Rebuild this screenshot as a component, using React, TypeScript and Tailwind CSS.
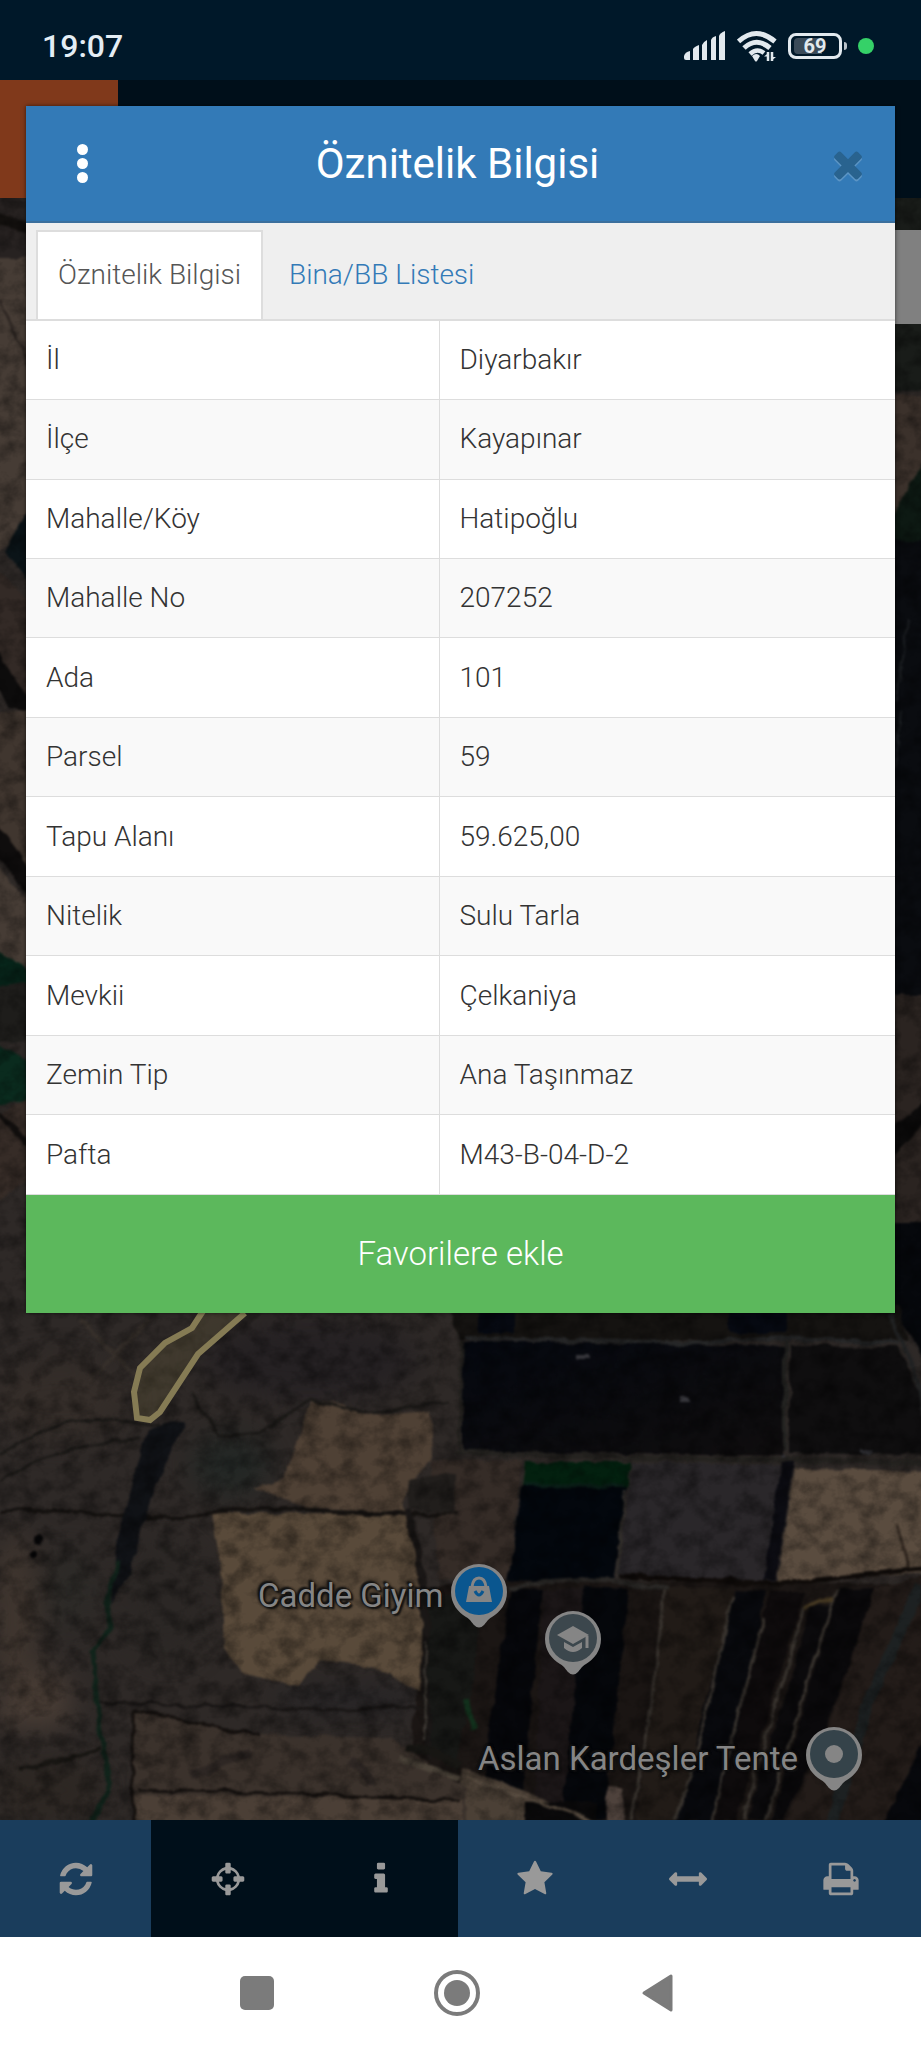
import React from "react";

const FONT = "font-['Roboto','Noto_Sans',sans-serif]";

const ICONS = {
  refresh:
    "M1639 1056q0 5-1 7-64 268-268 434.5t-478 166.5q-146 0-282.5-55t-243.5-157l-129 129q-19 19-45 19t-45-19-19-45v-448q0-26 19-45t45-19h448q26 0 45 19t19 45-19 45l-137 137q71 66 161 102t187 36q134 0 250-65t186-179q11-17 53-117 8-23 30-23h192q13 0 22.5 9.5t9.5 22.5zm25-800v448q0 26-19 45t-45 19h-448q-26 0-45-19t-19-45 19-45l138-138q-148-137-349-137-134 0-250 65t-186 179q-11 17-53 117-8 23-30 23h-199q-13 0-22.5-9.5t-9.5-22.5v-7q65-268 270-434.5t480-166.5q146 0 284 55.5t245 156.5l130-129q19-19 45-19t45 19 19 45z",
  crosshairs:
    "M1325 1024h-109q-26 0-45-19t-19-45v-128q0-26 19-45t45-19h109q-32-108-112.5-188.5t-188.5-112.5v109q0 26-19 45t-45 19h-128q-26 0-45-19t-19-45v-109q-108 32-188.5 112.5t-112.5 188.5h109q26 0 45 19t19 45v128q0 26-19 45t-45 19h-109q32 108 112.5 188.5t188.5 112.5v-109q0-26 19-45t45-19h128q26 0 45 19t19 45v109q108-32 188.5-112.5t112.5-188.5zm339-192v128q0 26-19 45t-45 19h-143q-37 161-154.5 278.5t-278.5 154.5v143q0 26-19 45t-45 19h-128q-26 0-45-19t-19-45v-143q-161-37-278.5-154.5t-154.5-278.5h-143q-26 0-45-19t-19-45v-128q0-26 19-45t45-19h143q37-161 154.5-278.5t278.5-154.5v-143q0-26 19-45t45-19h128q26 0 45 19t19 45v143q161 37 278.5 154.5t154.5 278.5h143q26 0 45 19t19 45z",
  info: "M1216 1344v128q0 26-19 45t-45 19h-512q-26 0-45-19t-19-45v-128q0-26 19-45t45-19h64v-384h-64q-26 0-45-19t-19-45v-128q0-26 19-45t45-19h384q26 0 45 19t19 45v576h64q26 0 45 19t19 45zm-128-1152v192q0 26-19 45t-45 19h-256q-26 0-45-19t-19-45v-192q0-26 19-45t45-19h256q26 0 45 19t19 45z",
  star: "M1728 647q0 22-26 48l-363 354 86 500q1 7 1 20 0 21-10.5 35.5t-30.5 14.5q-19 0-40-12l-449-236-449 236q-22 12-40 12-21 0-31.5-14.5t-10.5-35.5q0-6 2-20l86-500-364-354q-25-27-25-48 0-37 56-46l502-73 225-455q19-41 49-41t49 41l225 455 502 73q56 9 56 46z",
  arrows:
    "M1792 896q0 26-19 45l-256 256q-19 19-45 19t-45-19-19-45v-128h-1024v128q0 26-19 45t-45 19-45-19l-256-256q-19-19-19-45t19-45l256-256q19-19 45-19t45 19 19 45v128h1024v-128q0-26 19-45t45-19 45 19l256 256q19 19 19 45z",
  print:
    "M448 1536h896v-256h-896v256zm0-640h896v-384h-160q-40 0-68-28t-28-68v-160h-640v640zm1152 64q0-26-19-45t-45-19-45 19-19 45 19 45 45 19 45-19 19-45zm128 0v416q0 13-9.5 22.5t-22.5 9.5h-224v160q0 40-28 68t-68 28h-960q-40 0-68-28t-28-68v-160h-224q-13 0-22.5-9.5t-9.5-22.5v-416q0-79 56.5-135.5t135.5-56.5h64v-544q0-40 28-68t68-28h672q40 0 88 20t76 48l152 152q28 28 48 76t20 88v256h64q79 0 135.5 56.5t56.5 135.5z",
  times:
    "M1490 1322q0 40-28 68l-136 136q-28 28-68 28t-68-28l-294-294-294 294q-28 28-68 28t-68-28l-136-136q-28-28-28-68t28-68l294-294-294-294q-28-28-28-68t28-68l136-136q28-28 68-28t68 28l294 294 294-294q28-28 68-28t68 28l136 136q28 28 28 68t-28 68l-294 294 294 294q28 28 28 68z",
};

function Icon({ name, className }: { name: keyof typeof ICONS; className: string }) {
  return (
    <svg viewBox="0 0 1792 1792" className={className} fill="currentColor" aria-hidden="true">
      <path d={ICONS[name]} />
    </svg>
  );
}

function StatusBar() {
  return (
    <header className="flex h-20 items-center justify-between bg-[#001829] pt-3 pr-[47px] pl-[42px]">
      <time className="text-[32px] leading-9 font-medium text-[#e4edf4]">19:07</time>
      <div className="flex items-center gap-[11px] text-[#e2e9ee]">
        <svg className="h-8 w-[42px]" viewBox="0 0 42 32" fill="currentColor" aria-hidden="true">
          <path d="M0 26q1-4 6-5v9H2q-2 0-2-2z" />
          <path d="M9 19q1-2 6-4v15H9z" />
          <path d="M18 15q1-3 5-5v20h-5z" />
          <path d="M27 10q1-3 5-4v24h-5z" />
          <path d="M35 6q1-3 6-5v29h-6z" />
        </svg>
        <svg className="h-8 w-10" viewBox="0 0 40 32" fill="none" stroke="currentColor" strokeWidth="5" aria-hidden="true">
          <path d="M1.500 11.500Q19 -4.500 38 11.500" />
          <path d="M7 18Q19.500 6.500 33 18" />
          <path d="M13 24Q20 17.500 27 23" strokeWidth="4.500" />
          <path d="M15 26q4.500-4 8 0l-3 5q-1 1-2 0z" fill="currentColor" stroke="none" />
          <path d="M31 22v9M35 31v-9" strokeWidth="2.500" />
          <path d="M27 26.500l5-4v4zM39 27l-5 4v-4z" fill="currentColor" stroke="none" />
        </svg>
        <div className="flex items-center gap-0.5">
          <span className="relative flex h-[26px] w-[54px] items-center justify-center rounded-[8px] border-[3px] border-[#e2e9ee]">
            <span className="absolute top-0.5 bottom-0.5 left-[3px] w-7 rounded-l-[4px] bg-[#3a4a58]" />
            <span className="relative text-[20px] leading-5 font-bold">69</span>
          </span>
          <span className="h-2 w-[3px] rounded-r bg-[#b9c2c9]" />
        </div>
        <span className="h-4 w-4 rounded-full bg-[#35d168]" />
      </div>
    </header>
  );
}

function SatelliteMap() {
  return (
    <svg
      className="absolute inset-0 h-full w-full"
      viewBox="0 198 921 1622"
      preserveAspectRatio="xMidYMin slice"
      aria-hidden="true"
    >
      <defs>
        <filter id="edges" x="-5%" y="-5%" width="110%" height="110%" colorInterpolationFilters="sRGB">
          <feTurbulence type="fractalNoise" baseFrequency="0.05" numOctaves="3" seed="4" />
          <feDisplacementMap in="SourceGraphic" scale="8" xChannelSelector="R" yChannelSelector="G" />
          <feGaussianBlur stdDeviation="1" />
        </filter>
        <filter id="soft" x="-40%" y="-40%" width="180%" height="180%" colorInterpolationFilters="sRGB">
          <feGaussianBlur stdDeviation="14" />
        </filter>
        <filter id="grain" x="0" y="0" width="100%" height="100%" colorInterpolationFilters="sRGB">
          <feTurbulence type="fractalNoise" baseFrequency="0.05 0.06" numOctaves="4" seed="9" />
          <feColorMatrix values="0 0 0 0 0  0 0 0 0 0  0 0 0 0 0  1.4 0 0 0 -0.55" />
        </filter>
        <linearGradient id="field" x1="0" y1="0" x2="1" y2="1">
          <stop offset="0" stopColor="#05080f" />
          <stop offset="1" stopColor="#0f0d0e" />
        </linearGradient>
      </defs>
      <rect y="198" width="921" height="1622" fill="#2e2927" />

      <g filter="url(#soft)">
        <ellipse cx="60" cy="1400" rx="70" ry="40" fill="#342d29" />
        <ellipse cx="310" cy="1360" rx="110" ry="40" fill="#252123" />
        <ellipse cx="230" cy="1465" rx="40" ry="30" fill="#232725" />
        <ellipse cx="165" cy="1600" rx="45" ry="60" fill="#2b2725" />
        <ellipse cx="15" cy="1620" rx="22" ry="90" fill="#40362f" />
        <ellipse cx="45" cy="1700" rx="26" ry="30" fill="#4a3e36" />
        <ellipse cx="10" cy="1715" rx="18" ry="14" fill="#4a3e36" />
        <ellipse cx="70" cy="1590" rx="25" ry="40" fill="#2c2a27" />
        <ellipse cx="45" cy="1790" rx="60" ry="30" fill="#2d2723" />
        <ellipse cx="350" cy="1700" rx="80" ry="14" fill="#262426" />
      </g>

      <g filter="url(#edges)">
        <path d="M-10 190h50v70H-10z" fill="#272221" />
        <path d="M-10 222l50 12v-8l-50-14z" fill="#14110f" />
        <path d="M-10 258h50v267l-50 30z" fill="#463c35" />
        <path d="M0 300l30 70" stroke="#2a2320" strokeWidth="2" />
        <path d="M4 552l24-42v70z" fill="#0b1418" />
        <path d="M-10 560l40 40v110l-40-60z" fill="#332a26" />
        <path d="M-10 640l40 62v10l-20-4-20-40z" fill="#0d0c0c" />
        <path d="M-10 715l40-5v165l-40-50z" fill="#40362f" />
        <path d="M-10 815l40 52v30l-40-48z" fill="#0f0d0d" />
        <path d="M-10 860l40 42v66l-40-14z" fill="#463c35" />
        <path d="M-10 945l40 25v14l-40 4z" fill="#07251a" />
        <path d="M-10 988l40-6v60h-40z" fill="#1e1d1b" />
        <path d="M-10 1038l40 24v38l-40 6z" fill="#0a2b1e" />
        <path d="M-10 1118l40-20v80l-40 30z" fill="#362c27" />
        <path d="M-10 1100l40 42v8l-40-42z" fill="#141110" />

        <path d="M880 190h60v200h-60z" fill="#191c19" />
        <path d="M880 390l60 10v130h-60z" fill="#3b312b" />
        <path d="M890 520l50-90v120h-50z" fill="#0d1913" />
        <path d="M880 540h60v455h-60z" fill="#0a0c10" />
        <path d="M895 770l6-60M897 700l10-80" stroke="#1d2023" strokeWidth="2" />
        <path d="M880 995h60v230h-60z" fill="#2b2421" />
        <path d="M890 1130l50-45v24l-50 50z" fill="#0c0b0b" />
        <path d="M880 1223h60v160l-44-70h-16z" fill="#06080c" />

        <path d="M448 1305h450l10 35H460z" fill="#151311" />
        <path d="M478 1305h36v28h-36zM730 1305h55v28h-55z" fill="#060911" />
        <path d="M463 1345q4-4 12-4l308 5v110l-320-4z" fill="url(#field)" />
        <path d="M466 1338l160 3 60 2 100-5 112 5" stroke="#262728" strokeWidth="4" fill="none" />
        <path d="M790 1346l108 1 40 85v24l-148-2z" fill="#0f0e0f" />
        <path d="M785 1340v112" stroke="#242422" strokeWidth="4" />
        <path d="M463 1340l-4 112" stroke="#24221f" strokeWidth="4" />
        <path d="M890 1313l30 75 8 48" stroke="#212223" strokeWidth="4" fill="none" />
        <path d="M577 1357h12M680 1399h10M781 1457l5 2M860 1450l10 4" stroke="#35353a" strokeWidth="4" />
        <path d="M455 1453l180 5 150 2 150 3" stroke="#252320" strokeWidth="5" fill="none" />

        <path d="M430 1460h92l-13 120h-70z" fill="#352c27" />
        <path d="M525 1462h106l-4 27H522z" fill="#03200f" />
        <path d="M522 1487h105l-14 94H508z" fill="#03070d" />
        <path d="M524 1485l100 1" stroke="#0b2019" strokeWidth="4" />
        <path d="M632 1462l158 3-14 118-158-6z" fill="#2a272a" />
        <path d="M625 1490l-8 86" stroke="#35322e" strokeWidth="2" />
        <path d="M782 1462h12l-18 118h-12z" fill="#0c0c12" />
        <path d="M795 1468l145 2v102l-163 11z" fill="#5a4c3f" />
        <path d="M897 1525l13 44" stroke="#30261f" strokeWidth="3" />

        <path d="M425 1590l50-10 465 4v240H405z" fill="#1b1614" />
        <path d="M430 1600l50-15-5 90-20 90-28-15z" fill="#171816" />
        <path d="M511 1588l32 2-13 120-10 112h-35l2-80z" fill="#06070b" />
        <path d="M583 1588l46 2-14 130-10 100h-42z" fill="#05070b" />
        <path d="M543 1590h40l-20 230h-30z" fill="#1b1617" />
        <path d="M634 1590h30l-20 230h-36z" fill="#1a1513" />
        <path d="M666 1588h66l-26 140-32 94h-38z" fill="#211b17" />
        <path d="M734 1590l32 2-24 130-30 100h-36z" fill="#08090d" />
        <path d="M770 1592h36l-38 120-32 110h-22z" fill="#0e0b0c" />
        <path d="M812 1605h22l-44 140-24 75h-20z" fill="#0b0a0c" />
        <path d="M838 1590l37-2-52 150-40 82h-12z" fill="#0a090b" />
        <path d="M875 1588l65-16v160l-55 90h-100l40-82z" fill="#231c19" />
        <path d="M921 1585l-50 110-40 130" stroke="#1d2122" strokeWidth="12" fill="none" />
        <path d="M935 1718v106h-52z" fill="#07080c" />
        <path
          d="M664 1588l-9 92-10 65-14 75M732 1596l-28 130-28 94M764 1618l-30 110-22 92M805 1608l-40 130-22 82M836 1590l-46 150-24 80"
          stroke="#38332e"
          strokeWidth="3"
          fill="none"
        />
        <path d="M805 1610q14-12 28-12" stroke="#453822" strokeWidth="4" fill="none" />
        <path d="M508 1588q60-12 110-6l50 6" stroke="#2a2826" strokeWidth="5" fill="none" />
        <path d="M620 1576l160 8 150-16" stroke="#100c0a" strokeWidth="5" fill="none" />
        <path d="M462 1768l46 16 92 40H455z" fill="#4b4036" />
        <path d="M525 1802h72v22h-72z" fill="#0b0a0b" />
        <path d="M465 1778l60 20 70 24" stroke="#5a4e42" strokeWidth="3" fill="none" />
        <path d="M608 1786l12 1 6 35h-20z" fill="#4e423c" />
        <path d="M467 1700l6 30" stroke="#12301c" strokeWidth="6" />

        <path
          d="M312 1400l30 4 25 12 63-5 2 45-18 26-12 22 4 10-100-6-52-22 30-7 18-50z"
          fill="#4f4135"
        />
        <path
          d="M212 1514l195 0 13 46 4 40-4 92-50-26-50-6-20 26-56-12-20-26-3-80z"
          fill="#594a3a"
        />
        <path d="M0 1512q40-6 90 2l90 4q80-14 150-6l100 3 30-2" stroke="#161311" strokeWidth="4" fill="none" />
        <path d="M0 1455q60-40 110-35l50 5M0 1482q40-30 110-40l30-5M190 1395l30 40 40-3 50-32 60 14 80-12" stroke="#1c1a18" strokeWidth="3" fill="none" />
        <path d="M408 1480l47-6v40l-44-4z" fill="#211e1c" />
        <path d="M408 1510q22 90 17 170l5 80" stroke="#1a1716" strokeWidth="7" fill="none" />
        <path d="M427 1640l-2 100" stroke="#45403a" strokeWidth="2" />
        <path d="M100 1702l250 8 70-4" stroke="#1a1716" strokeWidth="3" fill="none" />
        <path d="M133 1712l127 23 130 3 76 50v34H133z" fill="#3b322c" />
        <path d="M133 1795l330 4v25H133z" fill="#4b3f36" />
        <path d="M133 1710v112M133 1710l127 26M140 1790l140 3 180 8" stroke="#15110f" strokeWidth="3" fill="none" />
        <path d="M190 1776q40-20 60-22M350 1760q20 10 20 25" stroke="#2e2724" strokeWidth="9" fill="none" />
        <path d="M400 1758l60 20" stroke="#4c443a" strokeWidth="6" />
        <path d="M405 1748l30 4 25 14" stroke="#171613" strokeWidth="9" fill="none" />
        <path d="M148 1430q40-14 35-6l-20 46-20 50-12 50-20 36 6-70z" fill="#101216" />
        <path d="M118 1560l-10 40 2 30-18 22 6 60 8 50 2 30-18 34" stroke="#11241b" strokeWidth="5" fill="none" />
        <path d="M20 1768l60-12 20-8" stroke="#181613" strokeWidth="4" fill="none" />
        <circle cx="38" cy="1539" r="4" fill="#060607" />
        <circle cx="33" cy="1553" r="4" fill="#060607" />
        <path d="M80 1320l60 60M150 1320l-60 60" stroke="#37302b" strokeWidth="4" />
      </g>

      <rect y="198" width="921" height="1622" filter="url(#grain)" opacity="0.6" />
      <path
        d="M205 1308l-13 20-27 15-25 25-6 24 3 26 13 2 10-8 38-58 47-41"
        fill="#6f6440"
        fillOpacity="0.28"
        stroke="#857b54"
        strokeWidth="6"
      />
    </svg>
  );
}

function Pin({ color, children }: { color: string; children: React.ReactNode }) {
  return (
    <svg className="h-16 w-14" viewBox="0 0 56 64" aria-hidden="true">
      <path
        d="M28 0a28 28 0 0 1 28 28c0 12-7 20-15 25-5 3-6 6-8 8q-5 5-10 0c-2-2-3-5-8-8C7 48 0 40 0 28A28 28 0 0 1 28 0z"
        fill="#858585"
      />
      <circle cx="28" cy="27" r="24" fill={color} />
      {children}
    </svg>
  );
}

const LABEL = "text-[33px] leading-9 font-normal whitespace-nowrap text-[#858585]";
const HALO = "[text-shadow:0_0_3px_#111,0_0_3px_#111,2px_2px_2px_#111,-2px_-2px_2px_#111]";

function MapPlaces() {
  return (
    <>
      <div className="absolute top-[1366px] left-[258px] flex items-center gap-2">
        <span className={LABEL + " " + HALO}>Cadde Giyim</span>
        <Pin color="#0a568f">
          <path d="M18 22h20l3 16H15z" fill="#858585" />
          <path d="M21 23q1-9 7-9t7 9" fill="none" stroke="#858585" strokeWidth="3" />
          <path d="M24 27q4 8 8 0" fill="none" stroke="#0a568f" strokeWidth="3" />
        </Pin>
      </div>
      <div className="absolute top-[1413px] left-[545px]">
        <Pin color="#3c474d">
          <path d="M12 24l16-9 16 9-16 9z" fill="#858585" />
          <path d="M19 31l9 5 9-5v6q-9 8-18 0z" fill="#858585" />
          <path d="M42 25v12" stroke="#858585" strokeWidth="3" />
        </Pin>
      </div>
      <div className="absolute top-[1529px] left-[478px] flex items-center gap-2">
        <span className={LABEL + " " + HALO}>Aslan Kardeşler Tente</span>
        <Pin color="#35434a">
          <circle cx="28" cy="27" r="9" fill="#858585" />
        </Pin>
      </div>
    </>
  );
}

const ROWS = [
  ["İl", "Diyarbakır"],
  ["İlçe", "Kayapınar"],
  ["Mahalle/Köy", "Hatipoğlu"],
  ["Mahalle No", "207252"],
  ["Ada", "101"],
  ["Parsel", "59"],
  ["Tapu Alanı", "59.625,00"],
  ["Nitelik", "Sulu Tarla"],
  ["Mevkii", "Çelkaniya"],
  ["Zemin Tip", "Ana Taşınmaz"],
  ["Pafta", "M43-B-04-D-2"],
];

function AttributeDialog() {
  return (
    <section
      role="dialog"
      aria-label="Öznitelik Bilgisi"
      className="absolute inset-x-[26px] top-[26px] bg-white text-[28px] leading-10 font-light shadow-[0_0_4px_rgba(0,0,0,0.6)]"
    >
      <div className="flex h-[117px] items-center justify-between border-b-2 border-[#3b6f9d] bg-[#337ab7] pr-[26px] pl-[50px] text-white">
        <button type="button" aria-label="Menü" className="flex w-3 flex-col items-center gap-[3px]">
          <span className="h-[11px] w-[11px] rounded-full bg-white" />
          <span className="h-[11px] w-[11px] rounded-full bg-white" />
          <span className="h-[11px] w-[11px] rounded-full bg-white" />
        </button>
        <h1 className="text-[42px] leading-[48px] font-normal">Öznitelik Bilgisi</h1>
        <button type="button" aria-label="Kapat" className="text-[#29638f] drop-shadow-[0_2px_0_#5c95c5]">
          <Icon name="times" className="h-[42px] w-[42px]" />
        </button>
      </div>

      <div role="tablist" className="flex h-[98px] items-end border-b-2 border-[#dddddd] bg-[#efefef] pt-[7px] pl-[10px]">
        <button
          type="button"
          role="tab"
          aria-selected="true"
          className="h-full border-2 border-b-0 border-[#dddddd] bg-white px-5 pb-0.5 text-[#555555]"
        >
          Öznitelik Bilgisi
        </button>
        <button type="button" role="tab" aria-selected="false" className="h-full px-[26px] text-[#337ab7]">
          Bina/BB Listesi
        </button>
      </div>

      <table className="h-[874px] w-full border-collapse text-[#333333]">
        <tbody>
          {ROWS.map(([label, value]) => (
            <tr key={label} className="border-b border-[#dddddd] even:bg-[#f9f9f9]">
              <th scope="row" className="w-[413px] border-r border-[#dddddd] px-5 text-left font-light">
                {label}
              </th>
              <td className="px-5">{value}</td>
            </tr>
          ))}
        </tbody>
      </table>

      <button type="button" className="block h-[118px] w-full bg-[#5cb85c] text-[33px] text-white">
        Favorilere ekle
      </button>
    </section>
  );
}

const TOOLS: { icon: keyof typeof ICONS; label: string; active?: boolean }[] = [
  { icon: "crosshairs", label: "Konum", active: true },
  { icon: "info", label: "Bilgi", active: true },
  { icon: "star", label: "Favoriler" },
  { icon: "arrows", label: "Ölçüm" },
  { icon: "print", label: "Yazdır" },
];

function Toolbar() {
  return (
    <div role="toolbar" className="flex h-[117px] bg-[#1a3d5c] pr-[3px] text-[#999999]">
      <button type="button" aria-label="Yenile" className="flex w-[151px] items-center justify-center">
        <Icon name="refresh" className="h-[38px] w-[38px]" />
      </button>
      {TOOLS.map((t) => (
        <button
          key={t.icon}
          type="button"
          aria-label={t.label}
          className={"flex flex-1 items-center justify-center " + (t.active ? "bg-[#000f1a]" : "")}
        >
          <Icon name={t.icon} className="h-[38px] w-[38px]" />
        </button>
      ))}
    </div>
  );
}

function NavBar() {
  return (
    <nav className="flex h-[111px] items-center justify-center gap-[154px] bg-white pr-2">
      <button type="button" aria-label="Son uygulamalar" className="flex w-[46px] justify-center">
        <span className="h-[34px] w-[34px] rounded-[5px] bg-[#7b7b7b]" />
      </button>
      <button
        type="button"
        aria-label="Ana ekran"
        className="flex h-[46px] w-[46px] items-center justify-center rounded-full border-4 border-[#7b7b7b]"
      >
        <span className="h-[26px] w-[26px] rounded-full bg-[#7b7b7b]" />
      </button>
      <button type="button" aria-label="Geri" className="flex w-[46px] justify-center">
        <svg viewBox="0 0 32 40" className="h-10 w-8" aria-hidden="true">
          <path d="M3 20L30 3v34z" fill="#7b7b7b" stroke="#7b7b7b" strokeWidth="3" strokeLinejoin="round" />
        </svg>
      </button>
    </nav>
  );
}

export default function App() {
  return (
    <div className={"flex min-h-screen flex-col bg-[#001829] " + FONT}>
      <StatusBar />
      <main className="relative flex flex-1 flex-col">
        <div className="flex h-[118px] bg-[#000f1a]">
          <div className="w-[118px] bg-[#80391b]" />
        </div>
        <div className="relative flex-1 overflow-hidden">
          <SatelliteMap />
          <div className="absolute top-8 right-0 h-[94px] w-10 bg-[#808080]" />
          <MapPlaces />
        </div>
        <Toolbar />
        <AttributeDialog />
      </main>
      <NavBar />
    </div>
  );
}
